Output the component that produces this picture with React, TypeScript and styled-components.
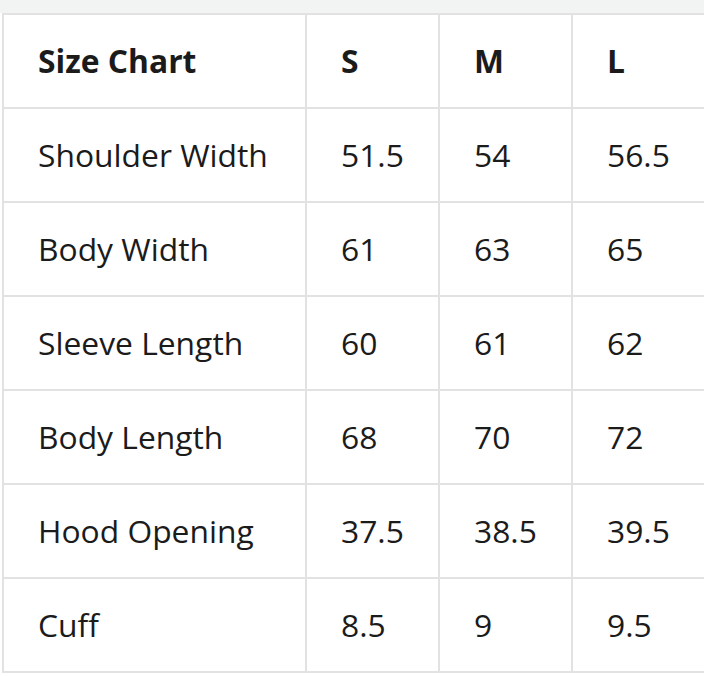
import React from "react";
import styled, { createGlobalStyle } from "styled-components";

const Global = createGlobalStyle`
  html, body { margin: 0; padding: 0; background: #ffffff; }
  body { font-family: "Open Sans", "Noto Sans", sans-serif; color: #1b1b1b; }
`;

const Page = styled.div`
  width: 704px;
  height: 676px;
  display: flex;
  flex-direction: column;
  background: #ffffff;
`;

const TopBand = styled.div`
  height: 13px;
  background: #f2f3f3;
  flex: none;
`;

const Table = styled.table`
  margin-left: 2px;
  width: 702px;
  border-collapse: collapse;
  table-layout: fixed;
`;

const Row = styled.tr`
  height: 94px;
`;

const Cell = styled.td<{ $head?: boolean }>`
  border: 2px solid #e2e2e2;
  padding: 0 0 0 34px;
  font-size: 31.8px;
  font-weight: ${(p) => (p.$head ? 700 : 400)};
  color: #1b1b1b;
  white-space: nowrap;
  vertical-align: middle;
  line-height: 1;
`;

const rows: [string, string, string, string][] = [
  ["Shoulder Width", "51.5", "54", "56.5"],
  ["Body Width", "61", "63", "65"],
  ["Sleeve Length", "60", "61", "62"],
  ["Body Length", "68", "70", "72"],
  ["Hood Opening", "37.5", "38.5", "39.5"],
  ["Cuff", "8.5", "9", "9.5"],
];

export default function App() {
  return (
    <Page>
      <Global />
      <TopBand />
      <Table>
        <colgroup>
          <col style={{ width: 303 }} />
          <col style={{ width: 133 }} />
          <col style={{ width: 133 }} />
          <col style={{ width: 133 }} />
        </colgroup>
        <tbody>
          <Row>
            <Cell $head>Size Chart</Cell>
            <Cell $head>S</Cell>
            <Cell $head>M</Cell>
            <Cell $head>L</Cell>
          </Row>
          {rows.map((r) => (
            <Row key={r[0]}>
              {r.map((v, i) => (
                <Cell key={i}>{v}</Cell>
              ))}
            </Row>
          ))}
        </tbody>
      </Table>
    </Page>
  );
}
